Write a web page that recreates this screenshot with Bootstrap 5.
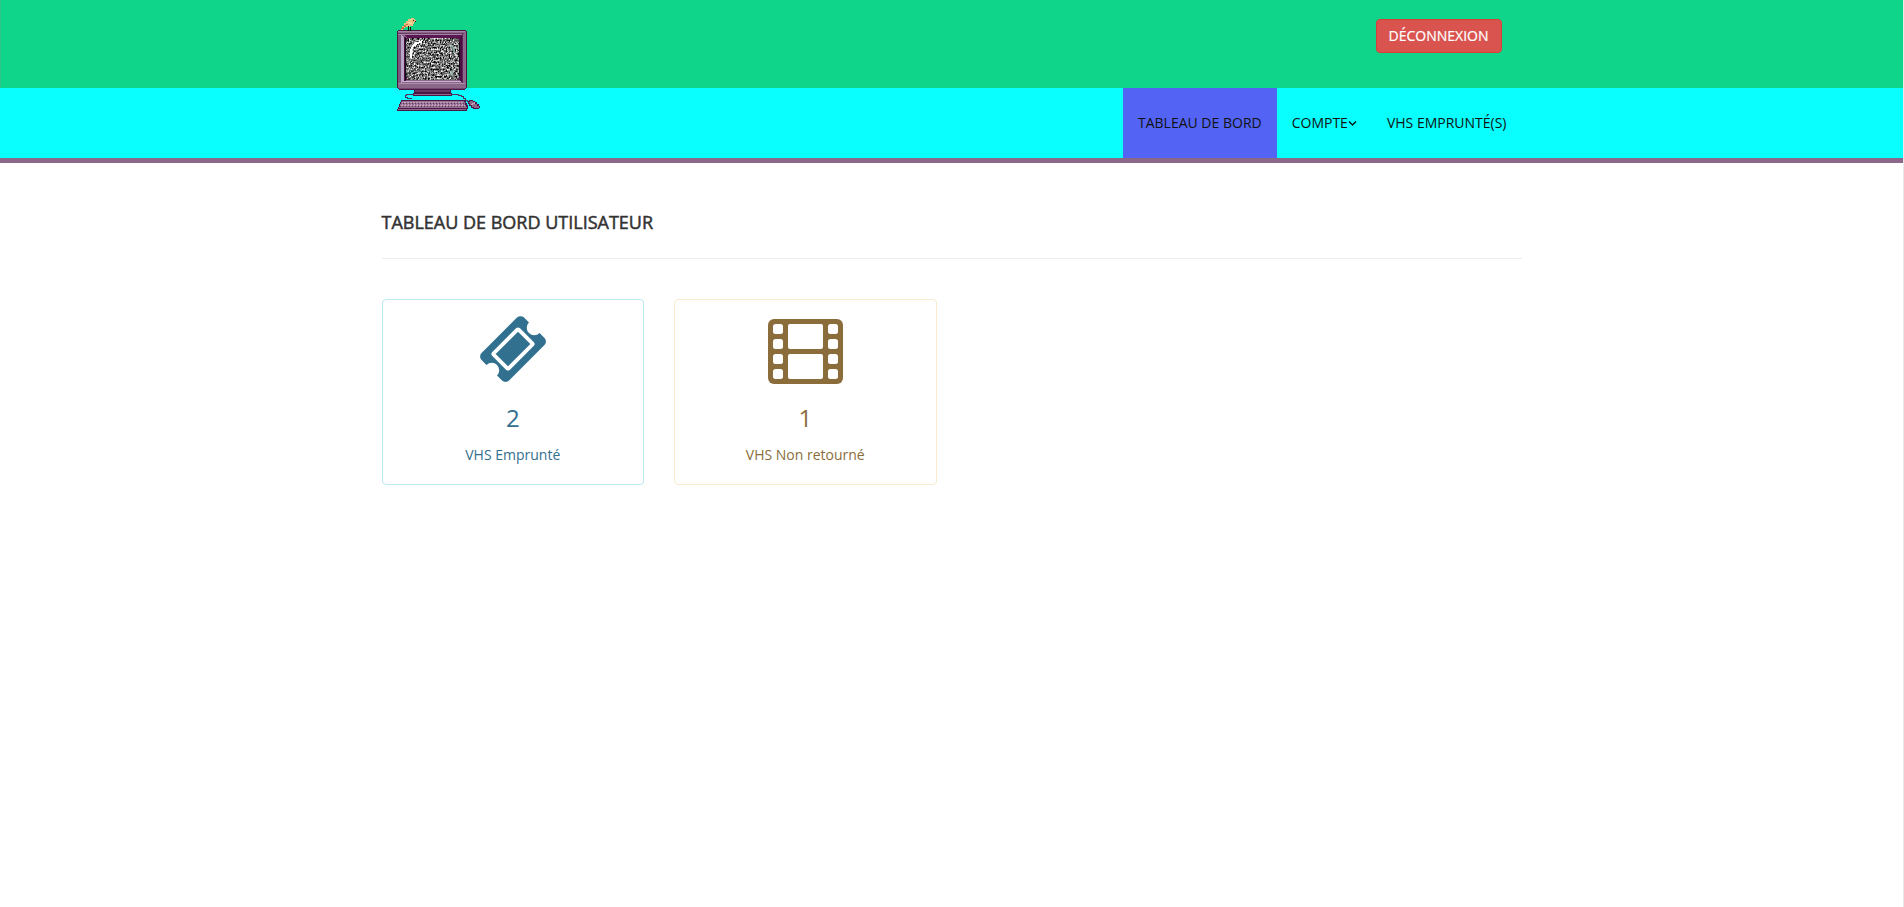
<!DOCTYPE html>
<html lang="fr">
<head>
<meta charset="utf-8">
<meta name="viewport" content="width=device-width, initial-scale=1">
<title>Tableau de bord utilisateur</title>
<link href="https://cdn.jsdelivr.net/npm/bootstrap@5.3.0/dist/css/bootstrap.min.css" rel="stylesheet">
<style>
body{font-family:"Open Sans",sans-serif;font-size:14px;line-height:20px;font-weight:400;color:#333;border-right:1px solid #e9e9e9;min-height:100vh;overflow:hidden}
.wrap{max-width:1170px;padding:0 15px}
.shift{width:1170px;margin:0 auto}
.topbar{background:#0fd58b;height:88px;box-shadow:inset 1px 0 #2fc58a}
.topbar .wrap{position:relative}
.logo{position:absolute;left:30px;top:17px;z-index:2}
.btn-out{--bs-btn-bg:#d9534f;--bs-btn-border-color:#d43f3a;--bs-btn-color:#fff;font-size:14px;line-height:20px;border-radius:4px;padding:6px 12px;margin:19px 20px 0 0;-webkit-text-stroke:.2px #fff}
.menubar{background:#09fffd;height:75px;border-bottom:5px solid #8b6789}
.menubar .nav-link{color:#111;padding:25px 15px;line-height:20px;height:70px;white-space:nowrap}
.menubar .nav-link.active{background:#5364f5}
.head-line{font-size:18px;line-height:20px;font-weight:400;-webkit-text-stroke:.5px #333;margin:49px 0 0}
.rule{margin:26px 0 0;border-top:1px solid #eee;opacity:1;color:#eee}
.tiles{margin-top:40px;gap:30px}
.tile{width:262.5px;height:186px;border:1px solid #bce8f1;border-radius:4px;text-align:center;color:#31708f;padding-top:14px}
.tile svg{display:block;margin:0 auto}
.tile.warn{border-color:#faebcc;color:#8a6d3b}
.num{font-size:24px;line-height:26px;margin-top:21px}
.lbl{margin-top:14px}
</style>
</head>
<body>
<header>
<div class="topbar"><div class="wrap shift d-flex justify-content-end align-items-start">
<a href="#" class="logo" aria-label="Accueil">
<svg class="d-block" width="84" height="95" viewBox="17 17 84 95" shape-rendering="crispEdges">
<defs><filter id="snow" x="0" y="0" width="100%" height="100%" color-interpolation-filters="sRGB"><feTurbulence type="fractalNoise" baseFrequency=".68 .55" numOctaves="2" seed="11"/><feColorMatrix values="1.7 1.2 0 0 -1  1.7 1.2 0 0 -1  1.7 1.2 0 0 -1  0 0 0 0 1"/></filter>
<pattern id="keys" width="3" height="3" patternUnits="userSpaceOnUse"><path d="M0 0h2v1h-2zM1 2h1v1h-1z" fill="#c0a0bd"/><path d="M2 1h1v1h-1z" fill="#67385f"/></pattern></defs>
<path d="M18 30h68v1h1v57h-1v1h-1v1h-66v-1h-1v-1h-1v-57h1z" fill="#4b1745"/>
<path d="M18 31h68v57h-68z" fill="#8b6789"/>
<path d="M18 31h67v1h-67zM18 34h65v1h-65z" fill="#a585a5"/><path d="M18 33h66v1h-66z" fill="#6b3d65"/>
<path d="M21 35l3 2v43l-3 3z" fill="#b9a5c6"/><path d="M18 35h3v48h-3z" fill="#7d587d"/>
<path d="M82 34h1v49h-1z" fill="#5c2955"/><path d="M83 34h2v49h-2z" fill="#8b6789"/>
<path d="M24 35h58v3h-55z" fill="#5a1650"/><path d="M24 37h2v44h-2zM80 36h2v46h-2z" fill="#4d0d45"/>
<path d="M23 81h58v1h-58z" fill="#c7b3d5"/><path d="M19 83h66v1h-66z" fill="#ad91ad"/><path d="M19 88h66v1h-66z" fill="#75466f"/>
<rect x="25" y="38" width="55" height="42" fill="#151015"/><rect x="26" y="38" width="53" height="42" filter="url(#snow)"/>
<path d="M31 58h-1v-7q1-8 10-10h2v2h-2q-7 2-8 8v6z" fill="#fff"/>
<path d="M69 45h4v2h2v6h-2v-4h-2v-2h-2zM74 71h-3v2h-3v2h5v-2h1z" fill="#a8d5cf" opacity=".5"/>
<path d="M28 38h-2v3h1v-2h1zM77 38h3v4h-1v-3h-2zM26 77h1v2h2v1h-3zM79 76h1v4h-3v-1h2z" fill="#51204b"/>
<path d="M34 89h37v4h1v3h-39v-3h1z" fill="#4b1745"/><path d="M35 90h35v2h-35z" fill="#663962"/><path d="M34 94h37v1h-37z" fill="#8b6789"/>
<path d="M31.500 99v-1h-4v-1h-2v-2h1v-1h7M71 94h7v1h3v1h2v2h2v2h2v1h2" fill="none" stroke="#4b335c"/>
<path d="M21 100h64v1h1v2h1v2h1v4h-1v2h-70v-2h1v-2h1v-3h1v-2h1z" fill="#4b1745"/><path d="M22 101h62l3 7h-68z" fill="#93708f"/><path d="M22 102h62l2 5h-66z" fill="url(#keys)"/><path d="M18 109h68v1h-68z" fill="#8b6789"/>
<path d="M89 100h4v1h2v1h2v2h2v2h1v2h-1v1h-6v-1h-2v-2h-2v-2h-1v-3h1z" fill="#4b1745"/><path d="M90 101h3v1h2v2h2v2h2v2h-5v-1h-2v-2h-2v-2h-1z" fill="#8b6789"/><path d="M91 104h1v-1h2v-1" fill="none" stroke="#c1a4ba"/>
<path d="M31 18h3v1h1v1h1v2h-2v2h-1v2h-3v1h-5v1h-2v2h-2v-2h1v-2h2v-3h2v-2h2v-2h2z" fill="#e8bf80"/><path d="M22 27h2v-2h2v-1h2v1h-2v2h-2v2h-3v-1h1z" fill="#ce7143"/><path d="M30 19h2v1h-2zM28 22h4v2h-3z" fill="#f5d99e"/>
<path d="M33 20h1v1h-1zM35 21h1v1h-1zM28 26h1v4h1v1h-2zM30 27h1v3h1v1h-2z" fill="#201810"/>
</svg></a>
<a class="btn btn-out" href="#">DÉCONNEXION</a>
</div></div>
<nav class="menubar"><div class="wrap shift">
<ul class="nav justify-content-end flex-nowrap">
<li class="nav-item"><a class="nav-link active" href="#">TABLEAU DE BORD</a></li>
<li class="nav-item"><a class="nav-link d-flex align-items-center" href="#">COMPTE<svg width="9" height="20" viewBox="0 0 9 20"><path d="M1 8.500l3.500 3.500 3.500-3.500" fill="none" stroke="#000" stroke-width="1.200"/></svg></a></li>
<li class="nav-item"><a class="nav-link" href="#">VHS EMPRUNTÉ(S)</a></li>
</ul></div></nav>
</header>
<main class="wrap shift">
<h4 class="head-line">TABLEAU DE BORD UTILISATEUR</h4>
<hr class="rule">
<div class="tiles d-flex">
<div class="tile"><svg width="70" height="70" viewBox="0 0 1792 1792" fill="currentColor"><path d="M1024 452l316 316-572 572-316-316zm-211 979l618-618q19-19 19-45t-19-45l-362-362q-18-18-45-18t-45 18l-618 618q-19 19-19 45t19 45l362 362q18 18 45 18t45-18zm889-637l-907 908q-37 37-90.5 37t-90.5-37l-126-125q56-56 56-136t-56-136-136-56-136 56l-125-126q-37-37-37-90.5t37-90.5l907-906q37-37 90.5-37t90.5 37l125 125q-56 56-56 136t56 136 136 56 136-56l126 125q37 37 37 90.5t-37 90.5z"/></svg>
<div class="num">2</div><div class="lbl">VHS Emprunté</div></div>
<div class="tile warn"><svg width="75" height="70" viewBox="0 0 75 70"><rect y="5" width="75" height="65" rx="6" fill="currentColor"/><g fill="#fff"><rect x="20" y="10" width="35" height="25" rx="2"/><rect x="20" y="40" width="35" height="25" rx="2"/><rect x="5" y="10" width="10" height="10" rx="2.500"/><rect x="5" y="25" width="10" height="10" rx="2.500"/><rect x="5" y="40" width="10" height="10" rx="2.500"/><rect x="5" y="55" width="10" height="10" rx="2.500"/><rect x="60" y="10" width="10" height="10" rx="2.500"/><rect x="60" y="25" width="10" height="10" rx="2.500"/><rect x="60" y="40" width="10" height="10" rx="2.500"/><rect x="60" y="55" width="10" height="10" rx="2.500"/></g></svg>
<div class="num">1</div><div class="lbl">VHS Non retourné</div></div>
</div>
</main>
<script src="https://cdn.jsdelivr.net/npm/bootstrap@5.3.0/dist/js/bootstrap.bundle.min.js"></script>
</body>
</html>
